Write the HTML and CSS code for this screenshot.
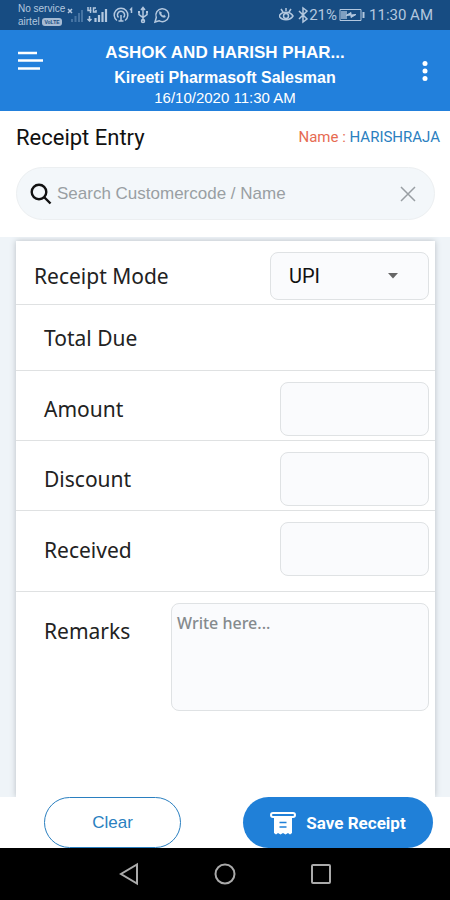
FILE: index.html
```html
<!DOCTYPE html>
<html lang="en">
<head>
<meta charset="utf-8">
<meta name="viewport" content="width=device-width, initial-scale=1">
<title>Receipt Entry</title>
<link rel="stylesheet" href="styles.css">
</head>
<body>
<div class="status">
  <div class="carrier">
    <span>No service</span>
    <span class="carrier-row">airtel <b class="volte">VoLTE</b></span>
  </div>
  <svg class="status-icons" width="108" height="20" viewBox="0 0 108 20" fill="none" stroke="#b4c8df" stroke-width="1.5" aria-hidden="true">
    <path d="M2 4l4 4M6 4l-4 4"/>
    <path d="M6 17v-3M9.500 17v-6M13 17V8M16 17V5" stroke="#4674a3" stroke-width="2"/>
    <path d="M22 2v3.500h3.500M24.500 2v6M30 3h-2.500v4H30V5M23.500 11v5M21.500 14l2 2 2-2"/>
    <path d="M29.500 17v-4M33 17v-7M36.500 17V7M40 17V4" stroke-width="2.200"/>
    <path d="M51 15.500a6.800 6.800 0 1 1 8 0M52.500 12.500a3.600 3.600 0 1 1 5 0M55 10v6M52.500 16h5"/>
    <path d="M64 5l1.500-1.500V8"/>
    <path d="M77 16V3M75 5l2-2.500L79 5M73 7v2.500l4 3 4-3V7"/><circle cx="77" cy="16" r="1.500"/><path d="M72 7h2M80 7h2" stroke-width="2"/>
    <path d="M89 17l1.300-4.500A6.500 6.500 0 1 1 93 15.700z"/><path d="M93.500 6.500c-1 3 3 7 6 5.500l-1-2-1.500 1-2-2 .5-1.500z" fill="#b4c8df" stroke-width=".5"/>
  </svg>
  <div class="status-right">
    <svg width="30" height="18" viewBox="0 0 30 18" fill="none" stroke="#b4c8df" stroke-width="1.500" aria-hidden="true">
      <path d="M0 10c3-5 11-5 14 0-3 5-11 5-14 0zM2 3l2 3M7 2v3M12 3l-2 3"/><circle cx="7" cy="10" r="2.500"/>
      <path d="M20 5l8 8-4 3V2l4 3-8 8"/>
    </svg>
    <span>21%</span>
    <svg class="battery" width="26" height="14" viewBox="0 0 26 14" fill="none" stroke="#b4c8df" aria-hidden="true">
      <path d="M1 1.500h21v11H1z"/><path d="M2 3h6v8H2z" fill="#7f9fc1" stroke="none"/><path d="M24.500 4v6" stroke-width="2"/><path d="M7 7.500l5-3v2.500l5-.5-5 3V7z" fill="#b4c8df"/>
    </svg>
    <span class="clock">11:30 AM</span>
  </div>
</div>
<header class="bar">
  <button class="icon-btn" aria-label="Menu">
    <svg width="26" height="21" viewBox="0 0 26 21" stroke="#fff" stroke-width="2.400"><path d="M0 3h19M0 10.500h25M0 18.500h22"/></svg>
  </button>
  <div class="titles">
    <h1>ASHOK AND HARISH PHAR...</h1>
    <p class="user">Kireeti Pharmasoft Salesman</p>
    <p class="date">16/10/2020 11:30 AM</p>
  </div>
  <button class="icon-btn more" aria-label="More options">
    <svg width="6" height="20" viewBox="0 0 6 20" fill="#fff"><circle cx="3" cy="2.500" r="2.500"/><circle cx="3" cy="10" r="2.500"/><circle cx="3" cy="17.500" r="2.500"/></svg>
  </button>
</header>
<section class="top">
  <div class="heading">
    <h2>Receipt Entry</h2>
    <p class="name">Name : <span>HARISHRAJA</span></p>
  </div>
  <div class="search">
    <svg width="22" height="22" viewBox="0 0 22 22" fill="none" stroke="#111" stroke-width="2.400" aria-hidden="true"><circle cx="9" cy="9" r="7.300"/><path d="M14 14l6.500 6.500"/></svg>
    <input type="text" aria-label="Search customer" placeholder="Search Customercode / Name">
    <button class="icon-btn" aria-label="Clear search">
      <svg width="16" height="16" viewBox="0 0 16 16" stroke="#999fa3" stroke-width="1.500"><path d="M1 1l14 14M15 1L1 15"/></svg>
    </button>
  </div>
</section>
<main>
  <form class="card">
    <div class="row mode">
      <label for="mode">Receipt Mode</label>
      <div class="select">
        <select id="mode"><option>UPI</option></select>
        <svg width="10" height="6" viewBox="0 0 10 6" fill="#666" aria-hidden="true"><path d="M0 0h10L5 5.500z"/></svg>
      </div>
    </div>
    <div class="row due"><span>Total Due</span></div>
    <div class="row"><label for="amount">Amount</label><input class="field" id="amount" type="text"></div>
    <div class="row"><label for="discount">Discount</label><input class="field" id="discount" type="text"></div>
    <div class="row received"><label for="received">Received</label><input class="field" id="received" type="text"></div>
    <div class="row remarks"><label for="remarks">Remarks</label><textarea class="field" id="remarks" placeholder="Write here..."></textarea></div>
  </form>
</main>
<footer class="actions">
  <button class="pill clear">Clear</button>
  <button class="pill save">
    <svg width="26" height="24" viewBox="0 0 26 24" aria-hidden="true"><rect x="1" y="2" width="24" height="4" rx="2" fill="none" stroke="#fff" stroke-width="2"/><path d="M4 5h18v17l-2 1.500-2-1.500-2.500 1.500L13 22l-2.500 1.500L8 22l-2 1.500L4 22z" fill="#fff"/><path d="M9.500 11.500h7M9.500 16h7" stroke="#2080d8" stroke-width="1.600"/></svg>
    <span>Save Receipt</span>
  </button>
</footer>
<nav class="system">
  <button class="icon-btn" aria-label="Back"><svg width="22" height="24" viewBox="0 0 22 24" fill="none" stroke="#aaa" stroke-width="2"><path d="M19 2.500v19L3 12z"/></svg></button>
  <button class="icon-btn" aria-label="Home"><svg width="22" height="24" viewBox="0 0 22 24" fill="none" stroke="#aaa" stroke-width="2"><circle cx="11" cy="12" r="9.500"/></svg></button>
  <button class="icon-btn" aria-label="Recent apps"><svg width="22" height="24" viewBox="0 0 22 24" fill="none" stroke="#aaa" stroke-width="2"><rect x="2" y="3" width="18" height="18" rx="1"/></svg></button>
</nav>
</body>
</html>
```
FILE: styles.css
```css
* { box-sizing: border-box; }
body {
  margin: 0;
  min-height: 100vh;
  display: flex;
  flex-direction: column;
  background: #fff;
  font-family: "Liberation Sans", sans-serif;
}
h1, h2, p { margin: 0; }
button, input, select, textarea { font: inherit; margin: 0; }
svg { display: block; flex: none; }
.icon-btn { border: 0; padding: 0; background: none; }

.status {
  height: 30px;
  padding: 0 17px 0 18px;
  display: flex;
  align-items: center;
  background: #174c82;
  color: #b4c8df;
}
.carrier { width: 48px; font-size: 10px; line-height: 13px; white-space: nowrap; }
.carrier span { display: block; }
.volte {
  display: inline-block;
  padding: 0 2px;
  border-radius: 3px;
  background: #a5bbd4;
  color: #174c82;
  font-size: 5px;
  line-height: 8px;
  vertical-align: middle;
}
.status-right {
  margin-left: auto;
  display: flex;
  align-items: center;
  font-family: Roboto, sans-serif;
  font-size: 15px;
}
.battery { margin-left: 2px; }
.clock { margin-left: 4px; }

.bar {
  height: 81px;
  padding: 0 22px 0 18px;
  display: flex;
  background: #2280dc;
  color: #fff;
}
.bar .icon-btn { align-self: flex-start; padding-top: 20px; }
.bar .more { width: 6px; padding-top: 31px; }
.titles { flex: 1; padding: 12px 16px 0 0; min-width: 0; text-align: center; white-space: nowrap; }
.titles h1 { font-size: 17px; font-weight: 700; line-height: 22px; }
.user { font-size: 16px; font-weight: 700; line-height: 28px; }
.date { font-size: 15px; line-height: 12px; }

.top { padding: 0 15px 17px 16px; }
.heading { height: 56px; padding-bottom: 4px; display: flex; align-items: center; justify-content: space-between; }
.heading h2 { font-family: Roboto, sans-serif; font-size: 22px; font-weight: 400; color: #111; }
.name { margin-right: -5px; font-family: Roboto, sans-serif; font-size: 15px; color: #e66b52; }
.name span { color: #2a80c0; }
.search {
  height: 53px;
  padding: 0 18px 0 13px;
  display: flex;
  align-items: center;
  gap: 5px;
  border: 1px solid #eceff1;
  border-radius: 27px;
  background: #f3f7fa;
}
.search input { flex: 1; min-width: 0; padding: 0; border: 0; background: none; font-size: 17px; }
.search input::placeholder { color: #999fa3; opacity: 1; }

main {
  flex: 1;
  display: flex;
  padding: 4px 15px 0 16px;
  background: #eff4f8;
  overflow: hidden;
}
.card {
  flex: 1;
  min-width: 0;
  background: #fff;
  box-shadow: 0 0 6px #b8bec4;
  font-family: "Noto Sans", sans-serif;
  font-size: 21px;
  color: #222;
}
.row {
  display: flex;
  align-items: center;
  justify-content: space-between;
  height: 70px;
  padding: 6px 6px 0 28px;
  border-bottom: 1px solid #dfe1e2;
}
.mode { height: 64px; padding: 6px 6px 0 18px; }
.due { height: 66px; padding-top: 0; }
.received { height: 81px; align-items: flex-start; padding-top: 11px; }
.received label { line-height: 56px; }
.remarks { height: auto; align-items: flex-start; padding-top: 11px; border: 0; }
.remarks label { line-height: 56px; }
.field, .select select {
  border: 1px solid #dfe2e4;
  border-radius: 8px;
  background: #fafbfd;
}
.field { width: 149px; height: 54px; padding: 0 8px; }
.select { position: relative; width: 159px; }
.select select {
  appearance: none;
  display: block;
  width: 100%;
  height: 48px;
  padding: 0 18px;
  font-family: Roboto, sans-serif;
  font-size: 20px;
  color: #111;
}
.select svg { position: absolute; right: 31px; top: 21px; pointer-events: none; }
textarea.field { width: 258px; height: 108px; padding: 7px 5px; resize: none; font-size: 16px; line-height: 24px; }
textarea::placeholder { color: #858a8d; opacity: 1; font-weight: 500; }

.actions { height: 51px; padding: 0 17px 0 44px; display: flex; justify-content: space-between; }
.pill { height: 51px; border-radius: 26px; display: flex; align-items: center; justify-content: center; font-size: 17px; }
.clear { width: 137px; border: 1px solid #2a7fc0; background: #fff; color: #2a7fc0; }
.save { width: 190px; gap: 10px; border: 0; background: #2080d8; color: #fff; font-family: Roboto, sans-serif; font-weight: 700; }
.system { height: 52px; display: flex; align-items: center; justify-content: center; gap: 74px; background: #000; }
```
